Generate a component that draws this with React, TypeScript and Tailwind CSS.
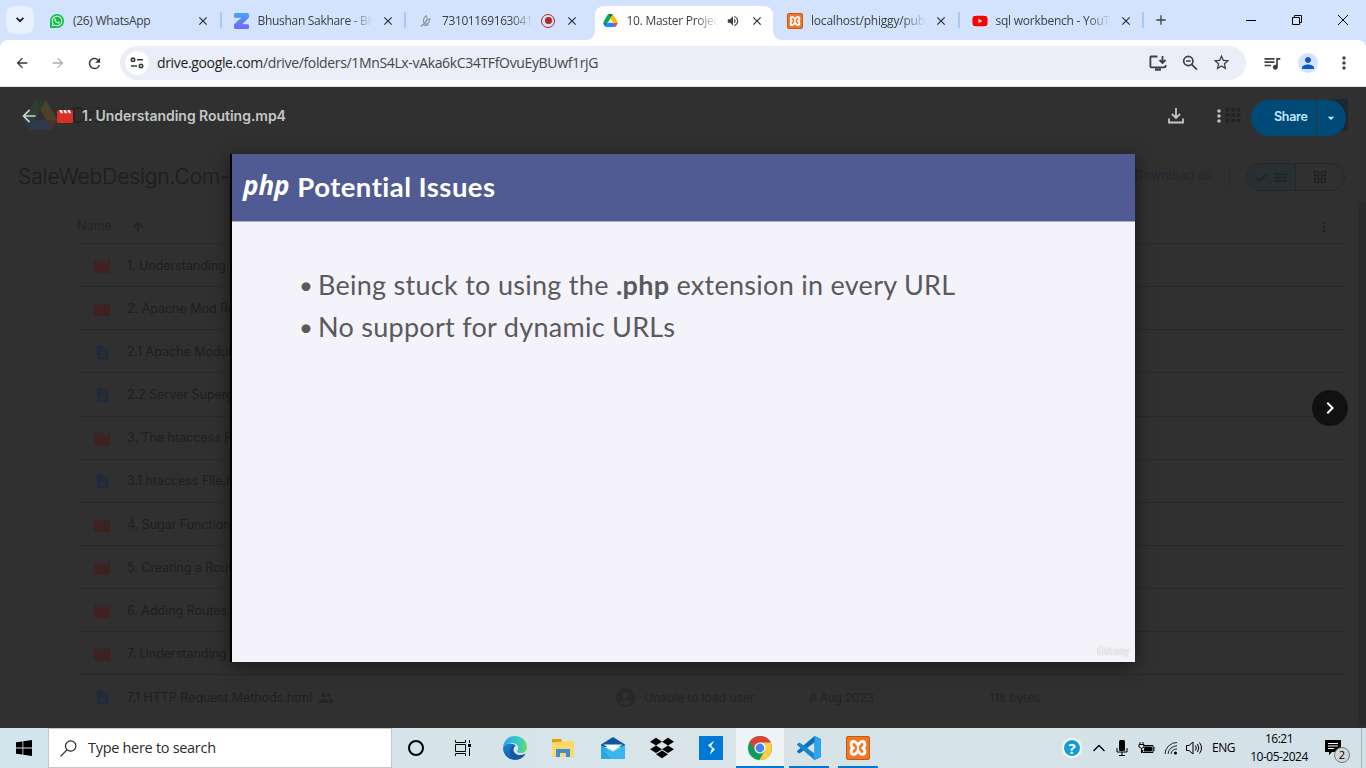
import React from "react";
import { MdDescription, MdPeople, MdAccountCircle, MdStarBorder, MdQueueMusic, MdPerson, MdMoreVert, MdArrowUpward, MdArrowBack, MdRefresh, MdArrowForward, MdApps, MdOutlineGridView, MdCheck, MdMenu, MdVolumeUp, MdClose, MdAdd, MdChevronRight, MdArrowDropDown } from "react-icons/md";
import { SiDropbox } from "react-icons/si";
import { FaWhatsapp, FaYoutube } from "react-icons/fa";

const UI = "font-['Open_Sans','Noto_Sans',sans-serif]";
const GS = "font-['Inter',sans-serif]";

function DriveLogo({ className }: { className: string }) {
  return (
    <svg viewBox="0 0 87.3 78" className={className}>
      <path d="m6.6 66.85 3.85 6.65c.8 1.4 1.95 2.5 3.3 3.3l13.75-23.8h-27.5c0 1.55.4 3.1 1.2 4.5z" fill="#0066da" />
      <path d="m43.65 25-13.75-23.8c-1.35.8-2.5 1.9-3.3 3.3l-25.4 44a9.06 9.06 0 0 0 -1.2 4.5h27.5z" fill="#00ac47" />
      <path d="m73.55 76.8c1.35-.8 2.5-1.9 3.3-3.3l1.6-2.75 7.65-13.25c.8-1.4 1.2-2.95 1.2-4.5h-27.5l5.85 11.5z" fill="#ea4335" />
      <path d="m43.65 25 13.75-23.8c-1.35-.8-2.9-1.2-4.5-1.2h-18.5c-1.6 0-3.15.45-4.5 1.2z" fill="#00832d" />
      <path d="m59.8 53h-32.3l-13.75 23.8c1.35.8 2.9 1.2 4.5 1.2h50.8c1.6 0 3.15-.45 4.5-1.2z" fill="#2684fc" />
      <path d="m73.4 26.5-12.7-22c-.8-1.4-1.95-2.5-3.3-3.3l-13.75 23.8 16.15 28h27.45c0-1.55-.4-3.1-1.2-4.5z" fill="#ffba00" />
    </svg>
  );
}

function Clapper({ className, slit }: { className: string; slit: string }) {
  return (
    <svg viewBox="0 0 16 13" className={className}>
      <path fill="currentColor" d="M1.500 0H14.500Q16 0 16 1.500V11.500Q16 13 14.500 13H1.500Q0 13 0 11.500V1.500Q0 0 1.500 0Z" />
      <path fill={slit} d="M2.200 0H4.600L6.200 3.200H3.800ZM6.200 0H8.600L10.200 3.200H7.800ZM10.200 0H12.600L14.200 3.200H11.800Z" />
    </svg>
  );
}

function Xampp({ className }: { className: string }) {
  return (
    <span className={`flex items-center justify-center overflow-hidden rounded-[2px] border border-[#c25a12] bg-[#f37623] ${className}`}>
      <svg viewBox="0 0 24 24" className="h-full w-full" fill="none" stroke="#fff" strokeWidth="3.200" strokeLinejoin="round" strokeLinecap="round">
        <path d="M7 12C3.600 10.500 3.600 5 7.500 5C10.500 5 10.500 8.500 12 8.500C13.500 8.500 13.500 5 16.500 5C20.400 5 20.400 10.500 17 12C20.400 13.500 20.400 19 16.500 19C13.500 19 13.500 15.500 12 15.500C10.500 15.500 10.500 19 7.500 19C3.600 19 3.600 13.500 7 12Z" />
        <path d="M12 8.500V15.500" strokeWidth="2.400" />
      </svg>
    </span>
  );
}

function Whatsapp() {
  return (
    <span className="flex size-[14px] items-center justify-center rounded-full rounded-bl-[3px] bg-[#0cc143]">
      <FaWhatsapp className="size-[12px] text-white" />
    </span>
  );
}

function ZLogo() {
  return (
    <svg viewBox="0 0 16 16" className="size-4">
      <defs><linearGradient id="z" x2="0" y2="1"><stop stopColor="#42a5ff" /><stop offset="1" stopColor="#7467f8" /></linearGradient></defs>
      <path fill="url(#z)" d="M1.500 0H13.500Q15 0 15 1.500V4.500L8.500 11H13.500Q15 11 15 12.500V14.500Q15 16 13.500 16H1.500Q0 16 0 14.500V11.500L6.500 5H1.500Q0 5 0 3.500V1.500Q0 0 1.500 0Z" />
      <path d="M1 5H7L5 7M9 11H14" stroke="#fff" strokeOpacity=".5" strokeWidth=".6" fill="none" />
    </svg>
  );
}

function Leaf() {
  return (
    <svg viewBox="0 0 16 16" className="size-4" fill="none" stroke="#8f969f" strokeWidth="1.100">
      <path d="M3 13.500L10.500 6M8.500 2.500C5 5 5 8 6 10.500M8.500 2.500L9 6M6 10.500C9 12 11.500 9.500 12 6C10 6 8 7.500 7.500 9M5 11.500C7 13 9 12.500 10.500 11" />
    </svg>
  );
}

function Recording() {
  return <span className="flex size-[14px] items-center justify-center rounded-full border-[1.5px] border-[#b3261e]"><span className="size-[7px] rounded-full bg-[#b3261e]" /></span>;
}

type TabProps = { icon: React.ReactNode; title: string; tracking: string; extra?: React.ReactNode; active?: boolean; sep?: boolean; fade?: boolean };

function Tab({ icon, title, tracking, extra, active, sep, fade = true }: TabProps) {
  return (
    <div className="relative flex h-[34px] w-[184.5px] shrink-0 items-center pb-[5px] pl-3">
      {active && (
        <svg viewBox="0 0 198 34" className="absolute top-0 -left-[6px] h-[34px] w-[198px]">
          <path d="M0 34Q10 34 10 24V10Q10 0 20 0H178Q188 0 188 10V24Q188 34 198 34Z" fill="#fff" />
        </svg>
      )}
      <span className="relative flex size-4 items-center justify-center">{icon}</span>
      <span className={`relative ml-2 overflow-hidden text-[12px] whitespace-nowrap text-[#3c4043] ${tracking} ${extra ? "w-[92px]" : "w-[115px]"} ${fade ? "[mask-image:linear-gradient(to_right,black_calc(100%-24px),transparent)]" : ""}`}>{title}</span>
      {extra && <span className="relative ml-[6px] flex size-4 items-center justify-center">{extra}</span>}
      <MdClose className={`relative size-[14px] text-[#2b2e31] ${extra ? "ml-[9px]" : "ml-[8px]"}`} />
      {sep && <span className="absolute top-[6px] right-0 h-4 w-[2px] bg-[#a8c7fa]" />}
    </div>
  );
}

function TabStrip() {
  return (
    <div className="flex h-10 shrink-0 items-start bg-[#d3e3fd] pt-[6px]">
      <button className="mr-[3px] ml-[6px] flex size-7 items-center justify-center rounded-[9px] bg-[#e9f1fe]">
        <svg viewBox="0 0 8 6" className="h-[6px] w-2" fill="none" stroke="#1f1f1f" strokeWidth="1.800"><path d="M.6 .8L4 4.200L7.400 .8" /></svg>
      </button>
      <Tab icon={<Whatsapp />} title="(26) WhatsApp" tracking="tracking-[-0.3px]" sep fade={false} />
      <Tab icon={<ZLogo />} title="Bhushan Sakhare - BHUSHAN" tracking="tracking-[-0.3px]" sep />
      <Tab icon={<Leaf />} title="731011691630411" tracking="tracking-[-0.4px]" extra={<Recording />} />
      <Tab icon={<DriveLogo className="h-[13px] w-[15px]" />} title="10. Master Project" tracking="tracking-[-0.27px]" extra={<MdVolumeUp className="size-[14px] text-[#3c4043]" />} active />
      <Tab icon={<Xampp className="size-4" />} title="localhost/phiggy/public" tracking="tracking-[-0.2px]" sep />
      <Tab icon={<FaYoutube className="size-4 text-[#f00]" />} title="sql workbench - YouTube" tracking="tracking-[-0.25px]" sep />
      <MdAdd className="mt-[6px] ml-[9px] size-4 text-[#3c4043]" />
      <div className="mt-[9px] ml-[77px] flex gap-[36px]">
        <svg className="size-[10px]" viewBox="0 0 10 10"><path d="M0 5.500H10" stroke="#000" /></svg>
        <svg className="size-[10px]" viewBox="0 0 10 10" fill="none" stroke="#000"><path d="M.5 2.500H7.500V9.500H.5ZM2.500 2.500V.5H9.500V7.500H7.500" /></svg>
        <svg className="size-[10px]" viewBox="0 0 10 10"><path d="M0 0L10 10M10 0L0 10" stroke="#000" /></svg>
      </div>
    </div>
  );
}

function Toolbar() {
  return (
    <div className="shrink-0 bg-[#d3e3fd]">
      <div className="flex h-[46px] items-center rounded-t-[8px] bg-white">
        <div className="ml-[14px] flex gap-5">
          <MdArrowBack className="size-4 text-[#34373a]" />
          <MdArrowForward className="size-4 text-[#adafb1]" />
          <MdRefresh className="size-[17px] text-[#34373a]" />
        </div>
        <div className="ml-[17px] flex h-[34px] w-[1126px] items-center rounded-full bg-[#ebeef8] pl-[5px]">
          <span className="flex size-6 items-center justify-center rounded-full bg-white">
            <svg viewBox="0 0 14 12" className="h-3 w-[14px]" fill="none" stroke="#34373a" strokeWidth="1.600"><circle cx="3" cy="2.800" r="1.700" /><path d="M7 2.800H13M1 9H7" /><circle cx="11" cy="9" r="1.700" /></svg>
          </span>
          <span className="-mt-[2px] ml-[8px] w-[986px] text-[14px] whitespace-nowrap tracking-[-0.35px] text-[#44474b]"><span className="text-[#1f1f1f]">drive.google.com</span>/drive/folders/1MnS4Lx-vAka6kC34TFfOvuEyBUwf1rjG</span>
          <svg viewBox="0 0 18 16" className="ml-[6px] h-4 w-[18px]" fill="none" stroke="#3c4043" strokeWidth="1.800"><path d="M8.500 1.500H2Q1.400 1.500 1.400 2.500V11.500Q1.400 12.300 2.200 12.300H15.500Q16.600 12.300 16.600 11.500V10M13.500 1V8M10.500 5L13.500 8L16.500 5" /><path d="M6 14.500H12" strokeWidth="2.400" /></svg>
          <svg viewBox="0 0 16 16" className="ml-[15px] size-4" fill="none" stroke="#3c4043" strokeWidth="1.700"><circle cx="6.300" cy="6" r="4.600" /><path d="M9.600 9.300L15 14.700M4 6H8.600" /></svg>
          <MdStarBorder className="-mt-px ml-[14px] size-[19px] text-[#3c4043]" />
        </div>
        <MdQueueMusic className="ml-[16px] size-5 text-[#3c4043]" />
        <span className="ml-[16px] flex size-5 items-center justify-center rounded-full bg-[#d3e3fd]"><MdPerson className="size-[18px] text-[#0b57d0]" /></span>
        <MdMoreVert className="ml-[16px] size-5 text-[#3c4043]" />
      </div>
      <div className="h-px bg-[#dfe3e3]" />
    </div>
  );
}

const files: [string, boolean][] = [
  ["1. Understanding Routing.mp4", true],
  ["2. Apache Mod Rewrite.mp4", true],
  ["2.1 Apache Modules.html", false],
  ["2.2 Server Superglobal.html", false],
  ["3. The htaccess File.mp4", true],
  ["3.1 htaccess File.html", false],
  ["4. Sugar Functions.mp4", true],
  ["5. Creating a Router.mp4", true],
  ["6. Adding Routes.mp4", true],
  ["7. Understanding HTTP.mp4", true],
  ["7.1 HTTP Request Methods.html", false],
];

function DrivePage() {
  return (
    <div className={`flex h-full flex-col text-[#1f1f1f] ${GS}`}>
      <div className="flex h-[56px] items-center pl-[24px]">
        <DriveLogo className="h-[30px] w-[33px] opacity-[0.13]" />
        <span className="ml-[14px] text-[22px] text-[#252525]">Drive</span>
        <MdApps className="ml-auto size-[22px] text-[#222]" />
        <span className="mr-[18px] ml-[84px] h-8 w-5 rounded-[3px] bg-[#1d2731]" />
      </div>
      <div className="flex h-[68px] items-center pl-[18px]">
        <span className="text-[21px] font-light tracking-[-0.1px] whitespace-nowrap text-[#1c1c1c]">SaleWebDesign.Com-Master</span>
        <span className="ml-auto pb-[3px] text-[13px] tracking-[-0.15px] text-[#202833]">Download all</span>
        <span className="ml-[18px] h-7 w-px bg-[#2b2b2b]" />
        <div className="mr-[21px] ml-[16px] flex h-7 w-[99px] overflow-hidden rounded-full border border-[#262626] text-[#1f1f1f]">
          <span className="flex w-[49px] items-center justify-center gap-[3px] border-r border-[#262626] bg-[#283034]"><MdCheck className="size-[15px]" /><MdMenu className="size-[17px]" /></span>
          <span className="flex flex-1 items-center justify-center"><MdOutlineGridView className="size-4" /></span>
        </div>
      </div>
      <div className="mr-[19px] ml-[77px] flex h-[33px] items-center border-b border-[#292929] pb-px text-[12.5px] text-[#222]">
        Name<MdArrowUpward className="ml-[18px] size-4" />
        <MdMoreVert className="mr-[15px] ml-auto size-4" />
      </div>
      <div className="mr-[19px] ml-[77px] flex flex-1 flex-col">
        {files.map(([name, movie]) => (
          <div key={name} className="flex h-[43.15px] shrink-0 items-center border-b border-[#292929] pt-[2px] pl-[17px] text-[12.5px] whitespace-nowrap text-[#1e1e1e] last:border-0">
            {movie ? <Clapper className="mt-px h-[13px] w-4 text-[#3f2120]" slit="#303030" /> : <span className="flex w-4 justify-center"><MdDescription className="size-[17px] shrink-0 text-[#202a3d]" /></span>}
            <span className="ml-[17px] tracking-[-0.03px]">{name}</span>
            {name.startsWith("7.1") && (
              <div className="flex flex-1 items-center text-[12px] text-[#232323]">
                <MdPeople className="ml-[6px] size-4" />
                <MdAccountCircle className="ml-[280px] size-[23px] text-[#282828]" />
                <span className="ml-[7px] w-[165px] tracking-[-0.02px]">Unable to load user</span>
                <span className="w-[180px] tracking-[-0.2px]">8 Aug 2023</span>
                <span className="tracking-[-0.1px]">118 bytes</span>
              </div>
            )}
          </div>
        ))}
      </div>
    </div>
  );
}

function Viewer() {
  return (
    <div className={`absolute inset-0 flex flex-col ${GS}`}>
      <div className="flex h-[67px] items-center pb-[9px] pl-[19px]">
        <MdArrowBack className="size-5 text-[#d0d1d0]" />
        <Clapper className="ml-[18px] h-[13px] w-4 text-[#d93025]" slit="#fff" />
        <span className="-mt-[2px] ml-[9px] text-[14px] font-semibold tracking-[-0.03px] whitespace-nowrap text-[#c4c7c5]">1. Understanding Routing.mp4</span>
        <svg viewBox="0 0 16 16" className="ml-auto size-4" fill="none" stroke="#c4c7c5" strokeWidth="1.800"><path d="M8 0V9.500M4 6L8 10L12 6M1 10.500V14.500H15V10.500" /></svg>
        <MdMoreVert className="mr-[22px] ml-[25px] size-5 text-[#c4c7c5]" />
        <div className="mt-[3px] mr-5 flex h-9 w-[95px] gap-px overflow-hidden rounded-full text-[#c2e7ff]">
          <span className="flex w-[65px] items-center bg-[#004a77] pl-[23px] text-[12.5px] font-semibold tracking-[-0.3px]">Share</span>
          <span className="flex flex-1 items-center bg-[#004a77] pl-[6px]"><MdArrowDropDown className="size-4" /></span>
        </div>
      </div>
      <div className="ml-[230px] flex h-[508px] w-[905px] flex-col border-l-2 border-black bg-[#f4f3f9] shadow-[0_4px_16px_rgba(0,0,0,0.5)]">
        <div className="flex h-[68px] items-center border-b border-[#a9abcf] bg-[#505b93] pb-[2px] pl-[11px] font-['Lato',sans-serif] text-[27.5px] font-bold whitespace-nowrap text-white">
          <span className={`${UI} -mt-[3px] text-[26px] font-bold tracking-[-0.1px] italic`}>php</span>
          <span className="ml-[8px] tracking-[0.45px]">Potential Issues</span>
        </div>
        <ul className="mt-[42px] ml-[67px] flex-1 font-['Lato',sans-serif] text-[27px] leading-[42px] whitespace-nowrap text-[#59595e]">
          <li className="flex"><span className="mr-[5px] text-[24px]">•</span><span className="tracking-[0.28px]">Being stuck to using the <b>.php</b> extension in every URL</span></li>
          <li className="flex"><span className="mr-[5px] text-[24px]">•</span><span className="tracking-[0.28px]">No support for dynamic URLs</span></li>
        </ul>
        <span className="mr-[6px] mb-[3px] self-end text-[10px] tracking-[-0.4px] text-white [text-shadow:0_0_1px_#888]">Ûdemy</span>
      </div>
      <button className="absolute top-[303px] left-[1312px] flex size-9 items-center justify-center rounded-full bg-[#111]"><MdChevronRight className="size-6 text-white" /></button>
      <span className="absolute top-[114px] right-0 h-[524px] w-[7px] rounded-t-sm bg-[#2a2a2a]" />
    </div>
  );
}

function Slot({ children, className = "w-[48px]" }: { children: React.ReactNode; className?: string }) {
  return <div className={`flex h-10 shrink-0 items-center justify-center ${className}`}>{children}</div>;
}

function Taskbar() {
  return (
    <div className="flex h-10 shrink-0 items-center bg-linear-to-r from-[#d2e5ed] via-[#d8e4e8] to-[#d3e1e8] text-black">
      <Slot>
        <svg viewBox="0 0 16 16" className="size-4"><path d="M0 2.300L6.500 1.400V7.600H0ZM7.300 1.300L16 0V7.600H7.300ZM0 8.400H6.500V14.600L0 13.700ZM7.300 8.400H16V16L7.300 14.700Z" /></svg>
      </Slot>
      <div className="flex h-10 w-[344px] shrink-0 items-center border border-[#c4c7c8] bg-white pl-[11px]">
        <svg viewBox="0 0 17 17" className="size-[17px]" fill="none" stroke="#222" strokeWidth="1.200"><circle cx="10.700" cy="6" r="5.200" /><path d="M7 9.800L.5 16.300" /></svg>
        <span className="ml-[11px] text-[14.500px] tracking-[-0.3px] text-[#2b2b2b]">Type here to search</span>
      </div>
      <Slot><span className="size-4 rounded-full border-[2.500px] border-black" /></Slot>
      <Slot className="w-[46px]">
        <svg viewBox="0 0 16 16" className="size-4" fill="none" stroke="#000"><path d="M.5 0V2.500H10.500V0M.5 4.500H10.500V11.500H.5ZM.5 16V13.500H10.500V16M14.500 0V3M14.500 8V16" /><path d="M13 4H16V7H13Z" fill="#000" stroke="none" /></svg>
      </Slot>
      <Slot className="w-[58px]">
        <svg viewBox="0 0 24 24" className="size-6">
          <defs><linearGradient id="e1"><stop stopColor="#1ba7e8" /><stop offset=".6" stopColor="#37c6d0" /><stop offset="1" stopColor="#66e05c" /></linearGradient><linearGradient id="e2" x2="1" y2="1"><stop stopColor="#1b86d9" /><stop offset="1" stopColor="#0c4a98" /></linearGradient></defs>
          <path fill="url(#e1)" d="M0 11C1 4 6 0 12 0C19 0 24 5 24 11C24 15 21 17 18 17C14.500 17 14 15.500 14.500 14.500C17 10 12 6 7 7C4 7.500 1.500 9 0 11Z" />
          <path fill="url(#e2)" d="M0 11.500C2 7 10 6 13 10C9 10 7 16 12 19C16 21 20 20 22.300 17.800C20 22 16 24 12 24C5 24 0 18.500 0 11.500Z" />
          <path fill="#17579f" d="M9 10.500C5 15 8 22 15 23.500C19 22.500 21.500 20 22.300 17.800C18 20 13 19.500 11 16C10 14 10.500 12 12 10Z" />
        </svg>
      </Slot>
      <Slot className="w-[38px]">
        <svg viewBox="0 0 22 20" className="h-5 w-[22px]"><path d="M0 1H9L10.500 3H22V19H0Z" fill="#ffd869" /><path d="M0 1H9L10 3.500L0 4.500Z" fill="#dfa000" /><path d="M4 19V11H18V19H14V15H8V19Z" fill="#3b8ed0" /></svg>
      </Slot>
      <Slot className="w-[62px]">
        <svg viewBox="0 0 24 22" className="h-[22px] w-6"><path d="M0 7.500L12 0L24 7.500V10H0Z" fill="#0b57a4" /><path d="M0 8L12 15L24 8V22H0Z" fill="#2aa8e6" /><path d="M24 8V22H10L3 14Z" fill="#47c3f5" opacity=".5" /><path d="M2.500 7.500H21.500L12 14Z" fill="#f4f6f8" /></svg>
      </Slot>
      <Slot className="w-[36px]"><SiDropbox className="size-6" /></Slot>
      <Slot className="w-[56px] pl-[6px]">
        <span className="flex size-6 items-center justify-center bg-[#0078d7]"><svg viewBox="0 0 10 16" className="h-4 w-[9px]"><path d="M8 0L1 5L5.500 8.500L3 15.500L9 9.500L4.500 6Z" fill="#fff" /></svg></span>
      </Slot>
      <Slot className="w-[48px] border-b-2 border-[#0078d7] bg-[#eef3f5] pt-[2px]">
        <svg viewBox="0 0 24 24" className="size-6">
          <circle cx="12" cy="12" r="12" fill="#0f9d58" />
          <path d="M12 12L1.600 6A12 12 0 0 1 22.400 6L22.600 6.500H12Z" fill="#db4437" />
          <path d="M12 6.500H22.600A12 12 0 0 1 11.500 24L16.800 14.700Z" fill="#ffcd40" />
          <path d="M1.600 6L7.200 14.700L12 8Z" fill="#db4437" />
          <path d="M1.600 6L7.200 14.700L9 18L4 17L.5 11Z" fill="#0f9d58" />
          <circle cx="12" cy="12" r="5.600" fill="#fff" /><circle cx="12" cy="12" r="4.400" fill="#4285f4" />
        </svg>
      </Slot>
      <Slot className="mr-[9px] ml-[5px] w-[40px] border-b-2 border-[#0078d7] pt-[2px]">
        <svg viewBox="0 0 24 24" className="size-6"><path d="M17.500 0L24 3V21L17.500 24V6.500L2.500 17.500L0 16V15L17.500 0Z" fill="#0a72bd" /><path d="M0 8L2.500 6.500L17.500 17.500V24L0 9Z" fill="#1587d0" /><path d="M17.500 0L24 3V21L17.500 24Z" fill="#2aa5ee" /></svg>
      </Slot>
      <Slot className="w-[40px] border-b-2 border-[#0078d7] pt-[2px]"><Xampp className="size-6" /></Slot>
      <div className="ml-auto flex items-center">
        <span className="flex size-5 items-center justify-center rounded-full border-2 border-white bg-[#159bd7] text-[15px] leading-none font-bold text-white">?</span>
        <svg viewBox="0 0 12 8" className="ml-[11px] h-2 w-3" fill="none" stroke="#000" strokeWidth="1.300"><path d="M.5 7L6 1.500L11.500 7" /></svg>
        <svg viewBox="0 0 12 16" className="ml-[11px] h-4 w-3"><rect x="3" width="6" height="11" rx="1.500" /><path d="M1 8V12H11V8M6 12V15.500M3 15.500H9" fill="none" stroke="#000" /></svg>
        <svg viewBox="0 0 17 12" className="ml-[10px] h-3 w-[17px]" fill="none" stroke="#000"><path d="M5.500 3.500H15V10.500H4.500V8M16 5V9M2 0V2M5 0V2M1 2.500H6V5L3.500 6.500L1 5ZM3.500 6V11" /><path d="M7 5H13.500V9H6Z" fill="#000" /></svg>
        <svg viewBox="0 0 14 14" className="ml-[9px] size-[14px]" fill="none" stroke="#222" strokeWidth="1"><path d="M1 13A12 12 0 0 1 13 1.500M4 13A9 9 0 0 1 13 4.800M7 13A6 6 0 0 1 13 8" /><circle cx="11.500" cy="12" r="1.500" fill="#000" stroke="none" /></svg>
        <svg viewBox="0 0 17 14" className="ml-[8px] h-[14px] w-[17px]" fill="none" stroke="#000"><path d="M.5 4.500H3L7 1V13L3 9.500H.5ZM9.500 4.500Q11 7 9.500 9.500M11.500 3Q14 7 11.500 11M13.500 1.500Q17.500 7 13.500 12.500" /></svg>
        <span className="ml-[9px] w-[24px] text-[12px] tracking-[-0.5px]">ENG</span>
        <div className="ml-[11px] flex w-[64px] flex-col items-center text-[12px] leading-[18px] tracking-[-0.5px] whitespace-nowrap"><span>16:21</span><span>10-05-2024</span></div>
        <div className="relative ml-[14px] h-6 w-[26px]">
          <svg viewBox="0 0 16 15" className="h-[15px] w-4 translate-y-1"><path d="M0 0H16V12H7L4 15V12H0Z" /><path d="M3 3.500H13M3 6H13M3 8.500H9" stroke="#fff" /></svg>
          <span className="absolute right-[1px] -bottom-[3px] flex size-4 items-center justify-center rounded-full border border-[#777] bg-[#d4d7d9] text-[11px]">2</span>
        </div>
        <span className="ml-[10px] h-10 w-px bg-[#a9b4b9]" />
        <span className="w-1" />
      </div>
    </div>
  );
}

export default function App() {
  return (
    <div className={`flex h-[768px] w-[1366px] flex-col overflow-hidden bg-[#303030] ${UI}`}>
      <TabStrip />
      <Toolbar />
      <div className="relative h-[641px] shrink-0 overflow-hidden bg-[#303030]">
        <DrivePage />
        <Viewer />
      </div>
      <Taskbar />
    </div>
  );
}
